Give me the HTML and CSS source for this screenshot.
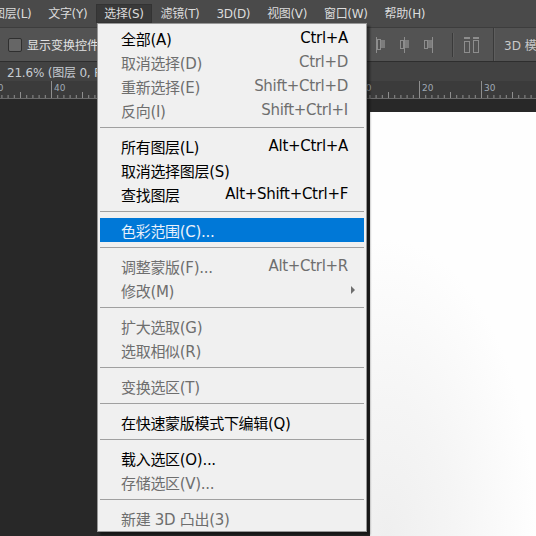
FILE: index.html
```html
<!DOCTYPE html>
<html lang="zh-CN">
<head>
<meta charset="utf-8">
<title>选择菜单</title>
<link rel="stylesheet" href="styles.css">
</head>
<body>
<div class="app">
  <div class="menubar">
    <span class="mb-item">图层(L)</span>
    <span class="mb-item">文字(Y)</span>
    <span class="mb-item mb-active">选择(S)</span>
    <span class="mb-item">滤镜(T)</span>
    <span class="mb-item">3D(D)</span>
    <span class="mb-item">视图(V)</span>
    <span class="mb-item">窗口(W)</span>
    <span class="mb-item">帮助(H)</span>
  </div>
  <div class="optbar">
    <div class="opt-left">
      <span class="checkbox"></span>
      <span class="opt-label">显示变换控件</span>
    </div>
    <div class="opt-right">
      <svg class="ico ico1" width="12" height="16" viewBox="0 0 12 16">
        <rect x="0" y="0" width="1" height="16" fill="#8d8d8d"/>
        <rect x="1.5" y="2.5" width="3" height="10" fill="none" stroke="#8d8d8d"/>
        <rect x="5" y="3" width="4" height="8" fill="#7c7c7c"/>
      </svg>
      <svg class="ico ico2" width="12" height="16" viewBox="0 0 12 16">
        <rect x="0.5" y="3.5" width="3" height="8" fill="none" stroke="#8d8d8d"/>
        <rect x="4" y="0" width="1" height="16" fill="#8d8d8d"/>
        <rect x="5" y="3" width="4" height="8" fill="#7c7c7c"/>
      </svg>
      <svg class="ico ico3" width="12" height="16" viewBox="0 0 12 16">
        <rect x="0.5" y="3.5" width="3" height="8" fill="none" stroke="#8d8d8d"/>
        <rect x="4" y="3" width="4" height="8" fill="#7c7c7c"/>
        <rect x="8" y="0" width="1" height="16" fill="#8d8d8d"/>
      </svg>
      <span class="vsep vsep-short"></span>
      <svg class="ico ico4" width="15" height="16" viewBox="0 0 15 16">
        <rect x="0" y="0" width="6" height="2" fill="#8d8d8d"/>
        <rect x="0.5" y="4.5" width="5" height="11" fill="none" stroke="#8d8d8d"/>
        <rect x="9" y="0" width="6" height="2" fill="#8d8d8d"/>
        <rect x="9.5" y="3.5" width="5" height="12" fill="none" stroke="#8d8d8d"/>
      </svg>
      <span class="vsep vsep-tall"></span>
      <span class="opt-3d">3D 模式:</span>
    </div>
  </div>
  <div class="tabbar">
    <span class="tab-text">21.6% (图层 0, RGB/8) ×</span>
  </div>
  <div class="ruler">
    <svg width="536" height="18" viewBox="0 0 536 18">
      <g fill="#8e8e8e">
        <rect x="-11" y="0" width="1" height="17"/>
        <rect x="-4.8" y="14" width="1" height="3"/>
        <rect x="1.4" y="14" width="1" height="3"/>
        <rect x="7.6" y="14" width="1" height="3"/>
        <rect x="13.8" y="14" width="1" height="3"/>
        <rect x="20" y="11" width="1" height="6"/>
        <rect x="26.2" y="14" width="1" height="3"/>
        <rect x="32.4" y="14" width="1" height="3"/>
        <rect x="38.6" y="14" width="1" height="3"/>
        <rect x="44.8" y="14" width="1" height="3"/>
        <rect x="51" y="0" width="1" height="17"/>
        <rect x="57.2" y="14" width="1" height="3"/>
        <rect x="63.4" y="14" width="1" height="3"/>
        <rect x="69.6" y="14" width="1" height="3"/>
        <rect x="75.8" y="14" width="1" height="3"/>
        <rect x="82" y="11" width="1" height="6"/>
        <rect x="88.2" y="14" width="1" height="3"/>
        <rect x="94.4" y="14" width="1" height="3"/>
        <rect x="357" y="0" width="1" height="17"/>
        <rect x="363.2" y="14" width="1" height="3"/>
        <rect x="369.4" y="14" width="1" height="3"/>
        <rect x="375.6" y="14" width="1" height="3"/>
        <rect x="381.8" y="14" width="1" height="3"/>
        <rect x="388" y="11" width="1" height="6"/>
        <rect x="394.2" y="14" width="1" height="3"/>
        <rect x="400.4" y="14" width="1" height="3"/>
        <rect x="406.6" y="14" width="1" height="3"/>
        <rect x="412.8" y="14" width="1" height="3"/>
        <rect x="419" y="0" width="1" height="17"/>
        <rect x="425.2" y="14" width="1" height="3"/>
        <rect x="431.4" y="14" width="1" height="3"/>
        <rect x="437.6" y="14" width="1" height="3"/>
        <rect x="443.8" y="14" width="1" height="3"/>
        <rect x="450" y="11" width="1" height="6"/>
        <rect x="456.2" y="14" width="1" height="3"/>
        <rect x="462.4" y="14" width="1" height="3"/>
        <rect x="468.6" y="14" width="1" height="3"/>
        <rect x="474.8" y="14" width="1" height="3"/>
        <rect x="481" y="0" width="1" height="17"/>
        <rect x="487.2" y="14" width="1" height="3"/>
        <rect x="493.4" y="14" width="1" height="3"/>
        <rect x="499.6" y="14" width="1" height="3"/>
        <rect x="505.8" y="14" width="1" height="3"/>
        <rect x="512" y="11" width="1" height="6"/>
        <rect x="518.2" y="14" width="1" height="3"/>
        <rect x="524.4" y="14" width="1" height="3"/>
        <rect x="530.6" y="14" width="1" height="3"/>
      </g>
      <g class="ruler-num">
        <text x="-8" y="10">50</text>
        <text x="54" y="10">40</text>
        <text x="360" y="10">10</text>
        <text x="422" y="10">20</text>
        <text x="484" y="10">30</text>
      </g>
    </svg>
  </div>
  <div class="canvas">
    <div class="paper"></div>
  </div>

  <div class="dropdown">
    <div class="dd-item dd-on"><span>全部(A)</span><span class="sc">Ctrl+A</span></div>
    <div class="dd-item"><span>取消选择(D)</span><span class="sc">Ctrl+D</span></div>
    <div class="dd-item"><span>重新选择(E)</span><span class="sc">Shift+Ctrl+D</span></div>
    <div class="dd-item"><span>反向(I)</span><span class="sc">Shift+Ctrl+I</span></div>
    <div class="dd-sep"></div>
    <div class="dd-item dd-on"><span>所有图层(L)</span><span class="sc">Alt+Ctrl+A</span></div>
    <div class="dd-item dd-on"><span>取消选择图层(S)</span></div>
    <div class="dd-item dd-on"><span>查找图层</span><span class="sc">Alt+Shift+Ctrl+F</span></div>
    <div class="dd-sep"></div>
    <div class="dd-item dd-hl"><span>色彩范围(C)...</span></div>
    <div class="dd-sep"></div>
    <div class="dd-item"><span>调整蒙版(F)...</span><span class="sc">Alt+Ctrl+R</span></div>
    <div class="dd-item"><span>修改(M)</span><svg class="arrow" width="5" height="8" viewBox="0 0 5 8"><path d="M0 0 L4 4 L0 8 Z" fill="#6e6e6e"/></svg></div>
    <div class="dd-sep"></div>
    <div class="dd-item"><span>扩大选取(G)</span></div>
    <div class="dd-item"><span>选取相似(R)</span></div>
    <div class="dd-sep"></div>
    <div class="dd-item"><span>变换选区(T)</span></div>
    <div class="dd-sep"></div>
    <div class="dd-item dd-on"><span>在快速蒙版模式下编辑(Q)</span></div>
    <div class="dd-sep"></div>
    <div class="dd-item dd-on"><span>载入选区(O)...</span></div>
    <div class="dd-item"><span>存储选区(V)...</span></div>
    <div class="dd-sep"></div>
    <div class="dd-item"><span>新建 3D 凸出(3)</span></div>
  </div>
</div>
</body>
</html>
```
FILE: styles.css
```css
html, body {
  margin: 0;
  padding: 0;
}
body {
  width: 536px;
  height: 536px;
  overflow: hidden;
  background: #282828;
  font-family: "DejaVu Sans", "Noto Sans CJK SC", sans-serif;
}
.app {
  position: relative;
  width: 536px;
  height: 536px;
  display: flex;
  flex-direction: column;
  overflow: hidden;
}

/* menu bar */
.menubar {
  height: 28px;
  flex: 0 0 28px;
  background: #4a4a4a;
  border-bottom: 1px solid #3d3d3d;
  display: flex;
  align-items: flex-start;
  gap: 1px;
  padding: 4px 0 0 0;
  margin-left: -15px;
  box-sizing: border-box;
  white-space: nowrap;
}
.mb-item {
  height: 19px;
  padding: 0 7px;
  box-sizing: border-box;
  font-size: 12px;
  line-height: 18px;
  color: #dcdcdc;
  border: 1px solid transparent;
  letter-spacing: -0.35px;
}
.mb-active {
  background: #393939;
  border-color: #333333;
}

/* options bar */
.optbar {
  flex: 0 0 33px;
  height: 33px;
  background: #535353;
  display: flex;
  align-items: center;
  white-space: nowrap;
  box-sizing: border-box;
}
.opt-left {
  flex: 0 0 376px;
  display: flex;
  align-items: center;
  padding-left: 8px;
  box-sizing: border-box;
  overflow: hidden;
}
.checkbox {
  width: 14px;
  height: 14px;
  box-sizing: border-box;
  background: #666666;
  border: 1px solid #2f2f2f;
  border-radius: 2px;
  margin-top: 1px;
}
.opt-label {
  margin-left: 5px;
  font-size: 12px;
  color: #e2e2e2;
}
.opt-right {
  display: flex;
  align-items: center;
  height: 33px;
}
.ico {
  display: block;
  margin-top: 1px;
}
.ico2, .ico3 {
  margin-left: 12px;
}
.vsep {
  width: 1px;
  background: #3a3a3a;
  box-shadow: 1px 0 0 #5e5e5e;
}
.vsep-short {
  height: 24px;
  margin-left: 16px;
}
.ico4 {
  margin-left: 11px;
}
.vsep-tall {
  height: 33px;
  margin-left: 14px;
}
.opt-3d {
  margin-left: 10px;
  font-size: 12px;
  color: #c9c9c9;
}

/* document tab */
.tabbar {
  flex: 0 0 20px;
  height: 20px;
  background: #424242;
  border-top: 1px solid #2e2e2e;
  box-sizing: border-box;
  display: flex;
  align-items: center;
  padding-left: 7px;
  white-space: nowrap;
}
.tab-text {
  font-size: 12px;
  color: #c7ccd2;
  letter-spacing: -0.2px;
}

/* ruler */
.ruler {
  flex: 0 0 18px;
  height: 18px;
  background: #3b3b3b;
  border-bottom: 1px solid #6a6a6a;
  box-sizing: border-box;
}
.ruler svg {
  display: block;
}
.ruler-num {
  font-family: "DejaVu Sans", sans-serif;
  font-size: 9px;
  fill: #9fa9b4;
}

/* canvas */
.canvas {
  flex: 1;
  display: flex;
  flex-direction: column;
  padding: 13px 0 0 370px;
  background: #282828;
}
.paper {
  flex: 1;
  background:
    radial-gradient(ellipse 90% 70% at 10% 100%, #efefef 0%, #f5f5f5 45%, rgba(255,255,255,0) 100%),
    #fefefe;
}

/* dropdown menu */
.dropdown {
  position: absolute;
  left: 97px;
  top: 23px;
  width: 270px;
  box-sizing: border-box;
  background: #f0f0f0;
  border: 1px solid #979797;
  padding: 2px 2px 1px 2px;
  box-shadow: 3px 3px 2px rgba(0, 0, 0, 0.45);
  font-size: 15px;
  letter-spacing: -0.3px;
  color: #6e6e6e;
  z-index: 5;
}
.dd-item {
  height: 24px;
  display: flex;
  align-items: center;
  justify-content: space-between;
  padding: 0 16px 0 21px;
  white-space: nowrap;
}
.dd-on {
  color: #000000;
}
.dd-hl {
  background: #0078d7;
  color: #e9f1fb;
}
.dd-sep {
  height: 12px;
  box-sizing: border-box;
  padding-top: 5px;
}
.dd-sep::before {
  content: "";
  display: block;
  height: 1px;
  background: #a0a0a0;
}
.arrow {
  display: block;
  margin-right: -8px;
}
```
